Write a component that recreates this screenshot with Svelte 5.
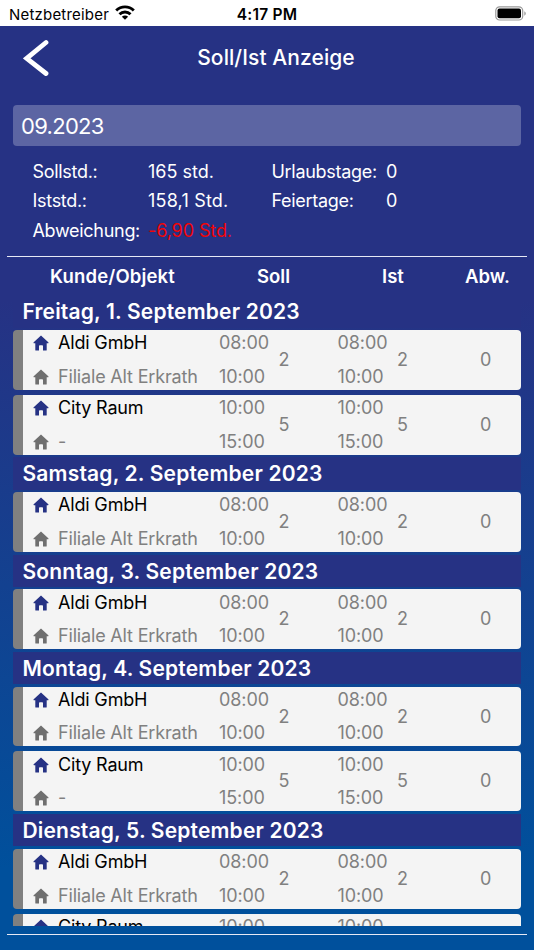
<script lang="ts">
    type Entry = {
        customer: string;
        object: string;
        from: string;
        to: string;
        hours: number;
        diff: number;
    };

    type Day = { label: string; entries: Entry[] };

    const aldi: Entry = { customer: 'Aldi GmbH', object: 'Filiale Alt Erkrath', from: '08:00', to: '10:00', hours: 2, diff: 0 };
    const city: Entry = { customer: 'City Raum', object: '-', from: '10:00', to: '15:00', hours: 5, diff: 0 };

    const days: Day[] = [
        { label: 'Freitag, 1. September 2023', entries: [aldi, city] },
        { label: 'Samstag, 2. September 2023', entries: [aldi] },
        { label: 'Sonntag, 3. September 2023', entries: [aldi] },
        { label: 'Montag, 4. September 2023', entries: [aldi, city] },
        { label: 'Dienstag, 5. September 2023', entries: [aldi, city] }
    ];
</script>

{#snippet house()}
    <svg class="house" viewBox="0 0 16 16" width="16" height="16" fill="currentColor">
        <path d="M8 .4 15.300 7.300c.4.4.2 1-.3 1H13.700v6.700a.6.6 0 0 1-.6.6H10v-4.500a.8.8 0 0 0-.8-.8H6.800a.8.8 0 0 0-.8.8v4.500H2.900a.6.6 0 0 1-.6-.6V8.300H1c-.5 0-.7-.6-.3-1z" />
    </svg>
{/snippet}

{#snippet times(entry: Entry)}
    <div class="times">
        <span>{entry.from}</span>
        <span>{entry.to}</span>
    </div>
    <div class="hours">{entry.hours}</div>
{/snippet}

<div class="screen">
    <div class="status">
        <div class="carrier">
            <span>Netzbetreiber</span>
            <svg width="20" height="15" viewBox="0 0 20 15" fill="none" stroke="#000" stroke-width="2.900">
                <path d="M1.200 5.500a12.600 12.600 0 0 1 17.600 0" />
                <path d="M4.500 9.300a7.800 7.800 0 0 1 11 0" />
                <path d="M10 14.800 6.900 11.700a4.400 4.400 0 0 1 6.200 0z" fill="#000" stroke="none" />
            </svg>
        </div>
        <div class="clock">4:17 PM</div>
        <svg class="battery" width="32" height="15" viewBox="0 0 32 15">
            <rect x=".8" y=".8" width="26.900" height="13.200" rx="3.800" fill="none" stroke="#999" stroke-width="1.200" />
            <rect x="2.500" y="2.500" width="23.500" height="9.800" rx="2" />
            <path d="M29.300 5.200c2 .9 2 3.600 0 4.500z" fill="#999" />
        </svg>
    </div>

    <header>
        <button class="back" aria-label="Zurück">
            <svg width="26" height="38" viewBox="0 0 26 38" fill="none" stroke="#fff" stroke-width="4.800" stroke-linecap="round">
                <path d="M23 3.500 3.700 19.300l19.300 15.200" />
            </svg>
        </button>
        <h1>Soll/Ist Anzeige</h1>
    </header>

    <div class="month">09.2023</div>

    <div class="summary">
        <span>Sollstd.:</span><span>165 std.</span><span>Urlaubstage:</span><span>0</span>
        <span>Iststd.:</span><span>158,1 Std.</span><span>Feiertage:</span><span>0</span>
        <span>Abweichung:</span><span class="negative">-6,90 Std.</span>
    </div>

    <div class="line"></div>

    <div class="columns">
        <span>Kunde/Objekt</span>
        <span>Soll</span>
        <span>Ist</span>
        <span>Abw.</span>
    </div>

    <div class="list">
        {#each days as day}
            <h2>{day.label}</h2>
            {#each day.entries as entry}
                <div class="card">
                    <div class="place">
                        <div class="customer">{@render house()}<span>{entry.customer}</span></div>
                        <div class="object">{@render house()}<span>{entry.object}</span></div>
                    </div>
                    {@render times(entry)}
                    {@render times(entry)}
                    <div class="diff">{entry.diff}</div>
                </div>
            {/each}
        {/each}
    </div>

    <div class="line"></div>
</div>

<style>
    :global(body) {
        margin: 0;
    }

    .screen {
        display: flex;
        flex-direction: column;
        width: 534px;
        height: 950px;
        overflow: hidden;
        box-sizing: border-box;
        background: linear-gradient(#263284 0, #263284 300px, #00509c 870px);
        color: #fff;
        font-family: Inter, 'Liberation Sans', sans-serif;
        font-size: 18px;
    }

    .status {
        display: grid;
        grid-template-columns: 1fr auto 1fr;
        align-items: center;
        height: 26px;
        padding: 0 6px 0 9px;
        flex: none;
        background: #fff;
        color: #000;
        font-size: 15px;
    }

    .carrier {
        display: flex;
        align-items: center;
        gap: 6px;
        padding-top: 2px;
        letter-spacing: 0.2px;
    }

    .carrier svg {
        margin-top: -4px;
    }

    .clock {
        padding-top: 2px;
        margin-right: 3px;
        font-size: 15.500px;
        font-weight: 600;
        letter-spacing: 0.2px;
    }

    .battery {
        justify-self: end;
        margin-right: 1px;
    }

    header {
        display: grid;
        grid-template-columns: 60px 1fr 60px;
        align-items: center;
        height: 64px;
        flex: none;
    }

    .back {
        display: flex;
        padding: 0 0 0 23px;
        border: 0;
        background: none;
    }

    h1 {
        margin: -2px 0 0 18px;
        font-size: 21px;
        font-weight: 500;
        letter-spacing: 0.08px;
        text-align: center;
    }

    .month {
        flex: none;
        height: 41px;
        margin: 15px 13px 0;
        padding-left: 8px;
        border-radius: 4px;
        background: #5c65a3;
        font-size: 22px;
        line-height: 42px;
        letter-spacing: -0.7px;
    }

    .summary {
        display: grid;
        grid-template-columns: 115px 124px 114px 1fr;
        grid-auto-rows: 29.700px;
        align-items: center;
        align-content: start;
        flex: none;
        height: 99px;
        margin: 10.300px 0 0 33px;
        padding-bottom: 0.400px;
    }

    .summary span:nth-child(odd) {
        margin-left: -0.500px;
        letter-spacing: -0.3px;
    }

    .summary span:nth-child(6) {
        letter-spacing: 0.2px;
    }

    .summary .negative {
        color: #f00508;
        letter-spacing: -0.1px;
    }

    .line {
        flex: none;
        height: 1.500px;
        margin: 0 7px;
        background: #e6e9f5;
    }

    .columns {
        display: grid;
        grid-template-columns: 211px 111px 128px 61px;
        align-items: center;
        flex: none;
        height: 38.100px;
        padding-left: 7px;
        font-size: 18.500px;
        font-weight: 600;
        text-align: center;
    }

    .columns span:first-child {
        letter-spacing: 0.15px;
    }

    .list {
        display: flex;
        flex-direction: column;
        flex: none;
        height: 631px;
        margin: 0 13px 7.500px;
        overflow: hidden;
    }

    h2 {
        flex: none;
        margin: 0;
        padding-left: 9.500px;
        height: 32.300px;
        background: #263284;
        font-size: 21px;
        font-weight: 600;
        line-height: 33px;
        letter-spacing: 0.18px;
    }

    .card {
        display: grid;
        grid-template-columns: 196px 59.500px 59px 59.500px 59px 1fr;
        flex: none;
        height: 59.900px;
        margin: 2.500px 0;
        box-sizing: border-box;
        border-left: 10.500px solid #808080;
        border-radius: 4px;
        overflow: hidden;
        background: #f4f4f4;
        color: #808080;
    }

    .place,
    .times {
        display: flex;
        flex-direction: column;
        justify-content: space-between;
        padding: 1.300px 0 2px;
        line-height: 23px;
    }

    .times {
        letter-spacing: -0.1px;
    }

    .customer,
    .object {
        display: flex;
        align-items: center;
        gap: 9px;
        padding-left: 10px;
        letter-spacing: -0.17px;
    }

    .customer {
        color: #000;
    }

    .house {
        margin-top: 1px;
    }

    .customer .house {
        color: #263284;
    }

    .object .house {
        color: #6f6f6f;
    }

    .hours,
    .diff {
        line-height: 59.500px;
    }

    .diff {
        padding-left: 24px;
    }
</style>
